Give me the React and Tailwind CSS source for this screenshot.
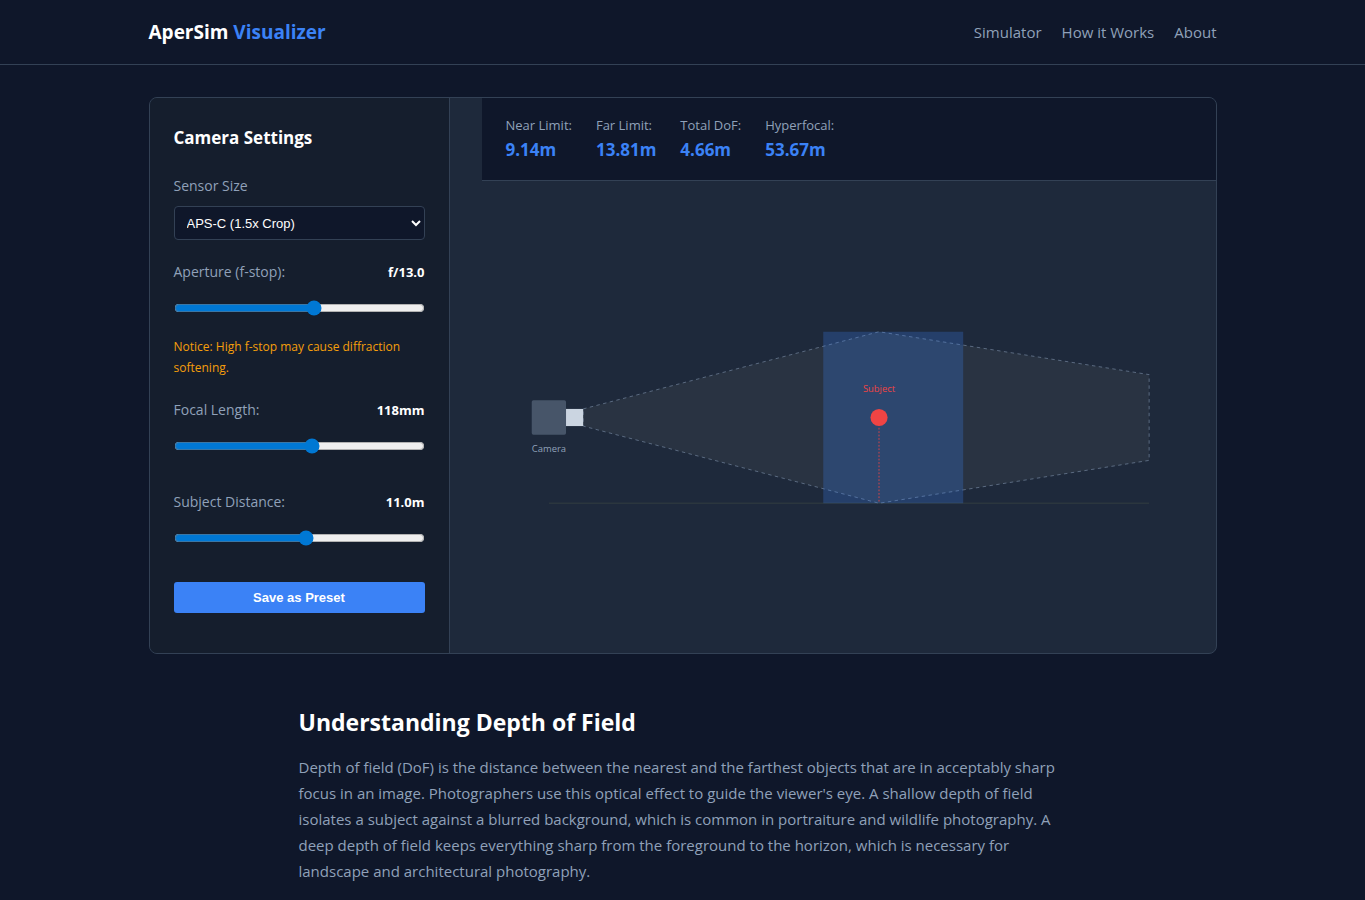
import { useState } from 'react';

const SENSORS = [
    { id: 'full', name: 'Full Frame (35mm)', coc: 0.03 },
    { id: 'apsc', name: 'APS-C (1.5x Crop)', coc: 0.02 },
    { id: 'mft', name: 'Micro Four Thirds', coc: 0.015 },
];

const NAV_LINKS = [
    { href: '#simulator', label: 'Simulator' },
    { href: '#how', label: 'How it Works' },
    { href: '#about', label: 'About' },
];

// all distances in metres
const calcDof = (focalMm, aperture, distance, coc) => {
    const f = focalMm / 1000;
    const hyperfocal = (focalMm * focalMm) / (aperture * coc) / 1000 + f;
    const near = (distance * (hyperfocal - f)) / (hyperfocal + distance - 2 * f);
    const far = distance < hyperfocal ? (distance * (hyperfocal - f)) / (hyperfocal - distance) : Infinity;
    return { near, far, total: far - near, hyperfocal };
};

const meters = (value) => (Number.isFinite(value) ? `${value.toFixed(2)}m` : '∞');

const SliderField = ({ id, label, display, children, ...inputProps }) => (
    <div className="mb-5 flex flex-col">
        <div className="flex items-center justify-between leading-6">
            <label htmlFor={id} className="text-sm leading-6 text-slate-400">{label}</label>
            <output htmlFor={id} className="text-[13px] font-bold text-white">{display}</output>
        </div>
        <input id={id} type="range" className="my-4 h-4 w-full accent-[#0078d4]" {...inputProps} />
        {children}
    </div>
);

const Stat = ({ label, value }) => (
    <div>
        <dt className="text-[13px] leading-[22px] text-slate-400">{label}</dt>
        <dd className="text-[17px] leading-7 font-bold text-[#3b82f6]">{value}</dd>
    </div>
);

const Diagram = ({ near, far, distance }) => {
    const toX = (m) => Math.min(50 + m * 35, 750);
    const subjectX = toX(distance);
    const nearX = toX(near);
    const farX = toX(far);

    return (
        <svg viewBox="0 0 800 400" className="w-full" role="img" aria-label="Depth of field diagram">
            <line x1="50" y1="300" x2="750" y2="300" stroke="#2b363e" strokeWidth="2" />
            <polygon
                points={`90,190 ${subjectX},100 750,150 750,250 ${subjectX},300 90,210`}
                fill="rgba(255,255,200,0.05)"
                stroke="#64748b"
                strokeWidth="1"
                strokeDasharray="4"
            />
            <rect x={nearX} y="100" width={farX - nearX} height="200" fill="#3b82f6" fillOpacity="0.25" />
            <rect x="30" y="180" width="40" height="40" rx="2" fill="#475569" />
            <rect x="70" y="190" width="20" height="20" fill="#cbd5e1" />
            <text x="50" y="240" textAnchor="middle" className="fill-slate-400 text-[11px]">Camera</text>
            <line x1={subjectX} y1="200" x2={subjectX} y2="300" stroke="#ef4444" strokeWidth="1" strokeDasharray="2" />
            <circle cx={subjectX} cy="200" r="10" fill="#ef4444" />
            <text x={subjectX} y="170" textAnchor="middle" className="fill-[#ef4444] text-[11px]">Subject</text>
        </svg>
    );
};

const App = () => {
    const [sensor, setSensor] = useState('apsc');
    const [aperture, setAperture] = useState(13);
    const [focal, setFocal] = useState(118);
    const [distance, setDistance] = useState(11);

    const { coc } = SENSORS.find((s) => s.id === sensor);
    const dof = calcDof(focal, aperture, distance, coc);

    return (
        <div className="min-h-screen bg-[#0f172a] font-['Segoe_UI','Open_Sans',sans-serif] text-slate-400">
            <header className="border-b border-[#334155]">
                <div className="mx-auto flex h-16 max-w-[1100px] items-center justify-between px-4">
                    <a href="#" className="text-[19px] font-bold text-white">
                        AperSim <span className="text-[#3b82f6]">Visualizer</span>
                    </a>
                    <nav className="flex gap-5 text-[15px]">
                        {NAV_LINKS.map((link) => (
                            <a key={link.href} href={link.href} className="hover:text-white">{link.label}</a>
                        ))}
                    </nav>
                </div>
            </header>

            <main>
                <section id="simulator" className="mx-auto max-w-[1100px] px-4 pt-8">
                    <div className="grid grid-cols-[300px_1fr] gap-8 overflow-hidden rounded-lg border border-[#334155] bg-[#1e293b]">
                        <aside className="border-r border-[#334155] bg-[#151e2d] p-6">
                            <h2 className="mb-5 text-[17px] leading-8 font-bold text-white">Camera Settings</h2>

                            <div className="mb-5">
                                <label htmlFor="sensor" className="mb-2 block text-sm leading-6">Sensor Size</label>
                                <select
                                    id="sensor"
                                    value={sensor}
                                    onChange={(e) => setSensor(e.target.value)}
                                    className="block h-[34px] w-full rounded border border-[#334155] bg-[#0f172a] px-2 font-['Liberation_Sans',sans-serif] text-[13px] text-white"
                                >
                                    {SENSORS.map((s) => (
                                        <option key={s.id} value={s.id}>{s.name}</option>
                                    ))}
                                </select>
                            </div>

                            <SliderField
                                id="aperture"
                                label="Aperture (f-stop):"
                                display={`f/${aperture.toFixed(1)}`}
                                min="1.4"
                                max="22"
                                step="0.1"
                                value={aperture}
                                onChange={(e) => setAperture(Number(e.target.value))}
                            >
                                {aperture > 11 && (
                                    <p className="mt-1 text-xs leading-[21px] text-[#f59e0b]">
                                        Notice: High f-stop may cause diffraction softening.
                                    </p>
                                )}
                            </SliderField>
                            <SliderField
                                id="focal"
                                label="Focal Length:"
                                display={`${focal}mm`}
                                min="16"
                                max="200"
                                value={focal}
                                onChange={(e) => setFocal(Number(e.target.value))}
                            />
                            <SliderField
                                id="distance"
                                label="Subject Distance:"
                                display={`${distance.toFixed(1)}m`}
                                min="0.8"
                                max="20"
                                step="0.1"
                                value={distance}
                                onChange={(e) => setDistance(Number(e.target.value))}
                            />

                            <button
                                type="button"
                                className="mb-4 block h-[31px] w-full rounded-[3px] bg-[#3b82f6] font-['Liberation_Sans',sans-serif] text-[13px] font-bold text-white hover:bg-blue-600"
                            >
                                Save as Preset
                            </button>
                        </aside>

                        <div className="flex flex-col">
                            <dl className="flex gap-6 border-b border-[#334155] bg-[#0f172a] px-6 py-4">
                                <Stat label="Near Limit:" value={meters(dof.near)} />
                                <Stat label="Far Limit:" value={meters(dof.far)} />
                                <Stat label="Total DoF:" value={meters(dof.total)} />
                                <Stat label="Hyperfocal:" value={meters(dof.hyperfocal)} />
                            </dl>
                            <div className="flex flex-1 items-center px-6">
                                <Diagram near={dof.near} far={dof.far} distance={distance} />
                            </div>
                        </div>
                    </div>
                </section>

                <article id="how" className="mx-auto max-w-[800px] px-4 pt-12">
                    <h2 className="mb-3 text-[23px] leading-10 font-bold text-white">Understanding Depth of Field</h2>
                    <p className="text-[15px] leading-[26px]">
                        Depth of field (DoF) is the distance between the nearest and the farthest objects that are in
                        acceptably sharp focus in an image. Photographers use this optical effect to guide the viewer's
                        eye. A shallow depth of field isolates a subject against a blurred background, which is common in
                        portraiture and wildlife photography. A deep depth of field keeps everything sharp from the
                        foreground to the horizon, which is necessary for landscape and architectural photography.
                    </p>
                </article>
            </main>
        </div>
    );
};

export default App;
